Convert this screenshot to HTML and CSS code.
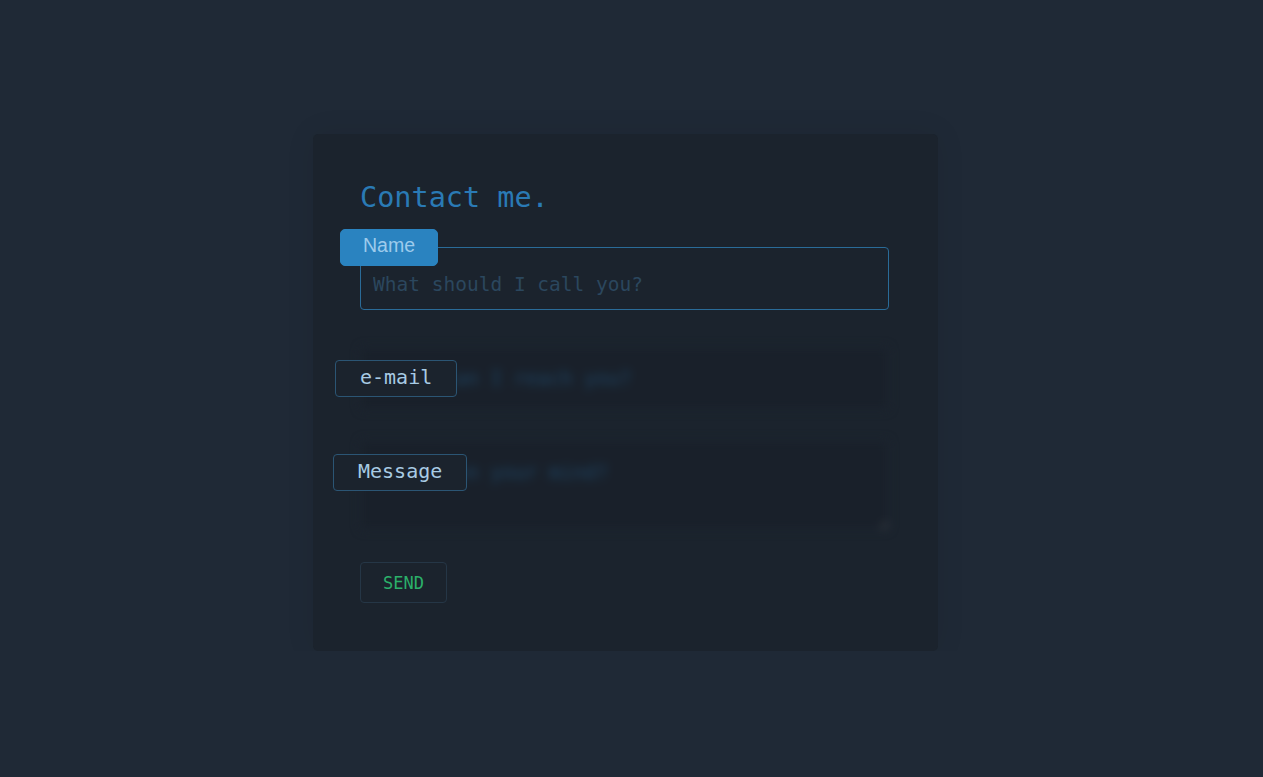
FILE: index.html
```html
<!DOCTYPE html>
<html lang="en">
<head>
  <meta charset="UTF-8">
  <meta name="viewport" content="width=device-width, initial-scale=1.0">
  <title>Contact me.</title>
  <link rel="stylesheet" href="styles.css">
</head>
<body>
  <div class="page">
    <div class="card">
      <h1>Contact me.</h1>
      <form id="contactForm" class="contact-form">
        <div class="field field-name">
          <label class="field-label is-active" for="name">Name</label>
          <input type="text" id="name" name="name" placeholder="What should I call you?">
        </div>

        <div class="field field-email">
          <label class="field-label" for="email">e-mail</label>
          <input class="is-blurred" type="email" id="email" name="email" placeholder="Where can I reach you?">
        </div>

        <div class="field field-message">
          <label class="field-label" for="message">Message</label>
          <textarea class="is-blurred" id="message" name="message" placeholder="What's on your mind?"></textarea>
        </div>

        <button type="submit" class="send">SEND</button>
      </form>
    </div>
  </div>
</body>
</html>
```

FILE: styles.css
```css
body {
  font-family: "DejaVu Sans Mono", "Liberation Mono", monospace;
  background-color: #1f2936;
  color: #a8cbe4;
  margin: 0;
  padding: 0;
}
.page {
  padding: 134px 12px 0 0;
}
.card {
  width: 625px;
  box-sizing: border-box;
  margin: 0 auto;
  padding: 46px 49px 48px 47px;
  background: #1b232d;
  border-radius: 5px;
  box-shadow: 0 0 30px rgba(0, 0, 0, 0.08);
}
h1 {
  margin: 0 0 31px;
  font-size: 28.5px;
  line-height: 36px;
  font-weight: normal;
  color: #2a7ab5;
}
.contact-form {
  display: flex;
  flex-direction: column;
  align-items: flex-start;
}
.field {
  position: relative;
  width: 100%;
}
.field-name {
  margin-bottom: 37px;
}
.field-email {
  margin-bottom: 30px;
}
.field-message {
  margin-bottom: 32px;
}
input,
textarea {
  display: block;
  width: 100%;
  box-sizing: border-box;
  font-family: inherit;
  font-size: 19.5px;
  color: #a8cbe4;
  background: #1b232d;
  border: 1px solid #2a6b98;
  border-radius: 4px;
  outline: none;
}
input {
  height: 63px;
  padding: 12px 12px 0;
}
textarea {
  height: 90px;
  padding: 20px 12px;
  line-height: 24px;
}
input::placeholder,
textarea::placeholder {
  color: #2b475e;
}
.is-blurred {
  filter: blur(5px);
  background: #19202a;
  border-color: #212c38;
}
input.is-blurred {
  padding-top: 0;
}
.is-blurred::placeholder {
  color: #1d4564;
}

.field-label {
  position: absolute;
  z-index: 1;
  height: 37px;
  box-sizing: border-box;
  padding: 0 24px;
  line-height: 33px;
  font-size: 20px;
  color: #a8cbe4;
  background: #1b232d;
  border: 1px solid #2b5574;
  border-radius: 4px;
}
.field-label.is-active {
  top: -18px;
  left: -20px;
  width: 98px;
  padding: 0;
  text-align: center;
  line-height: 31px;
  font-family: "Liberation Sans", Arial, sans-serif;
  font-size: 19.5px;
  color: #9dcbec;
  background: #2a83c0;
  border-color: #2a83c0;
  border-radius: 5px;
}
.field-email .field-label {
  top: 13px;
  left: -25px;
}
.field-message .field-label {
  top: 14px;
  left: -27px;
}
.send {
  height: 41px;
  padding: 0 22px;
  font-family: inherit;
  font-size: 17px;
  color: #2bb06a;
  background: #1b232d;
  border: 1px solid #253646;
  border-radius: 4px;
  cursor: pointer;
}
.send:hover {
  border-color: #2bb06a;
}
```
